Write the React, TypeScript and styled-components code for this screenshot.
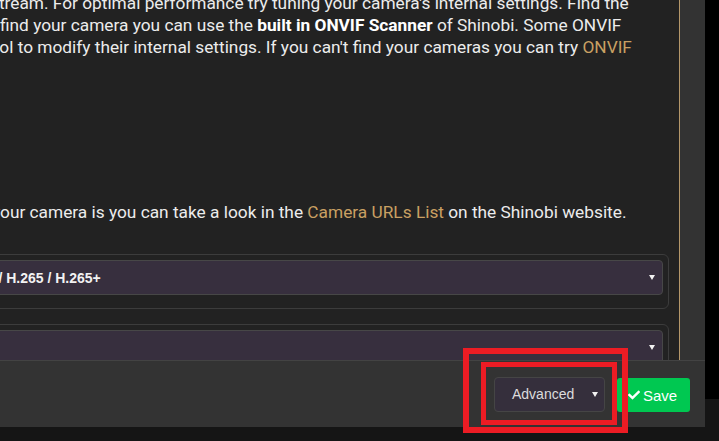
import React from 'react';
import styled, { createGlobalStyle } from 'styled-components';
import { FaCheck } from 'react-icons/fa';

const Global = createGlobalStyle`
  html, body {
    margin: 0;
    padding: 0;
    background: #151515;
  }
`;

const Caret = () => (
  <svg width="6" height="5" viewBox="0 0 6 5">
    <polygon points="0,0 6,0 3,5" fill="#f2f2f2" />
  </svg>
);

const App = () => {
  return (
    <Page>
      <Global />
      <Modal>
        <Body>
          <Content>
            <Paragraph>
              <Line $shift={-10}>
                stream. For optimal performance try tuning your camera's internal settings. Find the
              </Line>
              <Line $shift={0}>
                find your camera you can use the <b>built in ONVIF Scanner</b> of Shinobi. Some ONVIF
              </Line>
              <Line $shift={-16}>
                tool to modify their internal settings. If you can't find your cameras you can try{' '}
                <Link>ONVIF</Link>
              </Line>
            </Paragraph>
            <Paragraph $gap={143}>
              <Line $shift={-8}>
                your camera is you can take a look in the <Link>Camera URLs List</Link> on the Shinobi
                website.
              </Line>
            </Paragraph>
            <Fields>
              <FieldGroup>
                <Select>
                  <span>H.264 / H.264+ / H.265 / H.265+</span>
                  <Caret />
                </Select>
              </FieldGroup>
              <FieldGroup>
                <Select>
                  <span />
                  <Caret />
                </Select>
              </FieldGroup>
            </Fields>
          </Content>
          <Divider />
          <Track />
        </Body>
        <Footer>
          <ModeSelect>
            <span>Advanced</span>
            <Caret />
          </ModeSelect>
          <SaveButton>
            <FaCheck size={12} />
            Save
          </SaveButton>
        </Footer>
      </Modal>
      <Edge />
      <Mark $left={463} $top={348} $w={165} $h={85} $b={6} />
      <Mark $left={481} $top={362} $w={136} $h={63} $b={5} />
    </Page>
  );
};

const Page = styled.div`
  position: relative;
  display: flex;
  width: 719px;
  height: 441px;
  overflow: hidden;
  background: #151515;
`;
const Modal = styled.div`
  display: flex;
  flex-direction: column;
  width: 705px;
  height: 427px;
`;
const Edge = styled.div`
  width: 14px;
  height: 399px;
  background: #000;
`;
const Body = styled.div`
  display: flex;
  height: 360px;
`;
const Content = styled.div`
  flex: 1;
  min-width: 0;
  overflow: hidden;
  background: #222;
  padding-right: 10px;
  font-family: Roboto, 'Liberation Sans', sans-serif;
  font-size: 17.3px;
  line-height: 22px;
  color: #ececec;
`;
const Paragraph = styled.div<{ $gap?: number }>`
  margin-top: ${(p) => (p.$gap ? p.$gap : -8)}px;

  b {
    font-weight: 700;
    color: #fff;
  }
`;
const Line = styled.div<{ $shift: number }>`
  white-space: nowrap;
  margin-left: ${(p) => p.$shift}px;
`;
const Link = styled.span`
  color: #c9a063;
`;
const Fields = styled.div`
  display: grid;
  gap: 15px;
  margin-top: 31px;
  margin-left: -119px;
`;
const FieldGroup = styled.div`
  border: 1px solid #3c3c3c;
  border-radius: 6px;
  padding: 5px 5px 13px 5px;
`;
const Select = styled.div`
  display: flex;
  align-items: center;
  justify-content: space-between;
  height: 35px;
  box-sizing: border-box;
  padding: 0 7px 0 12px;
  background: #372f3e;
  border: 1px solid #474747;
  border-radius: 4px;
  font-family: 'Liberation Sans', Arial, sans-serif;
  font-size: 14px;
  font-weight: 700;
  color: #f2f2f2;
`;
const Divider = styled.div`
  width: 1px;
  background: #b5976a;
`;
const Track = styled.div`
  width: 25px;
  background: #333;
`;
const Footer = styled.div`
  flex: 1;
  display: flex;
  align-items: center;
  justify-content: flex-end;
  gap: 12px;
  padding-right: 15px;
  background: #333;
  border-top: 1px solid #434343;
`;
const ModeSelect = styled.div`
  display: flex;
  align-items: center;
  justify-content: space-between;
  width: 111px;
  height: 35px;
  box-sizing: border-box;
  padding: 0 6px 0 17px;
  background: #352f3c;
  border: 1px solid #454545;
  border-radius: 4px;
  font-family: 'Liberation Sans', Arial, sans-serif;
  font-size: 14px;
  color: #dcdcdc;
`;
const SaveButton = styled.button`
  display: flex;
  align-items: center;
  gap: 3px;
  width: 73px;
  height: 34px;
  margin-top: 2px;
  padding: 0 0 0 11px;
  border: none;
  border-radius: 3px;
  background: #00c851;
  color: #fff;
  font-family: 'Liberation Sans', Arial, sans-serif;
  font-size: 15px;
  cursor: pointer;
`;
const Mark = styled.div<{ $left: number; $top: number; $w: number; $h: number; $b: number }>`
  position: absolute;
  left: ${(p) => p.$left}px;
  top: ${(p) => p.$top}px;
  width: ${(p) => p.$w}px;
  height: ${(p) => p.$h}px;
  box-sizing: border-box;
  border: ${(p) => p.$b}px solid #ec1c24;
  pointer-events: none;
`;

export default App;
